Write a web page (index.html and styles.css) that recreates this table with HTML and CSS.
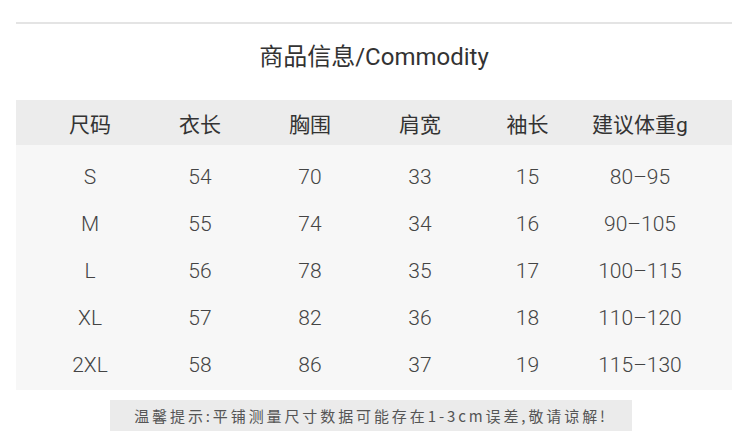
FILE: index.html
```html
<!DOCTYPE html>
<html lang="zh">
<head>
<meta charset="utf-8">
<link rel="stylesheet" href="styles.css">
</head>
<body>
<div class="page">
  <div class="rule"></div>
  <h1 class="title">商品信息/Commodity</h1>
  <div class="table">
    <div class="row head">
      <span>尺码</span><span>衣长</span><span>胸围</span><span>肩宽</span><span>袖长</span><span>建议体重g</span>
    </div>
    <div class="body">
      <div class="row"><span>S</span><span>54</span><span>70</span><span>33</span><span>15</span><span>80–95</span></div>
      <div class="row"><span>M</span><span>55</span><span>74</span><span>34</span><span>16</span><span>90–105</span></div>
      <div class="row"><span>L</span><span>56</span><span>78</span><span>35</span><span>17</span><span>100–115</span></div>
      <div class="row"><span>XL</span><span>57</span><span>82</span><span>36</span><span>18</span><span>110–120</span></div>
      <div class="row"><span>2XL</span><span>58</span><span>86</span><span>37</span><span>19</span><span>115–130</span></div>
    </div>
  </div>
  <div class="note">温馨提示:平铺测量尺寸数据可能存在1-3cm误差,敬请谅解!</div>
</div>
</body>
</html>
```
FILE: styles.css
```css
html, body {
  margin: 0;
  padding: 0;
  background: #ffffff;
}
.page {
  width: 750px;
  height: 447px;
  padding: 22px 18px 0 16px;
  box-sizing: border-box;
  font-family: "Noto Sans", "Noto Sans CJK SC", sans-serif;
  color: #333;
}
.rule {
  height: 2px;
  background: #e4e4e4;
}
.title {
  margin: 0;
  height: 76px;
  line-height: 66px;
  font-size: 24px;
  font-weight: 400;
  text-align: center;
  color: #333;
  font-family: "Roboto", "Noto Sans CJK SC", sans-serif;
}
.table {
  display: flex;
  flex-direction: column;
}
.row {
  display: grid;
  grid-template-columns: 110px 110px 110px 110px 105px 120px;
  padding-left: 19px;
  height: 47px;
  align-items: center;
  justify-items: center;
}
.head {
  height: 45px;
  background: #ececec;
  font-size: 21px;
  color: #333;
  font-family: "Roboto", "Noto Sans CJK SC", sans-serif;
}
.body {
  background: #f7f7f7;
  padding: 8px 0 2px;
}
.body .row {
  font-family: "Roboto", "Noto Sans", sans-serif;
  font-weight: 300;
  font-size: 21px;
  color: #444;
}
.note {
  margin: 10px 0 0 94px;
  width: 522px;
  height: 31px;
  background: #ebebeb;
  display: flex;
  align-items: center;
  justify-content: center;
  font-family: "Noto Sans CJK SC", sans-serif;
  font-size: 15px;
  letter-spacing: 2.9px;
  color: #555;
}
```
